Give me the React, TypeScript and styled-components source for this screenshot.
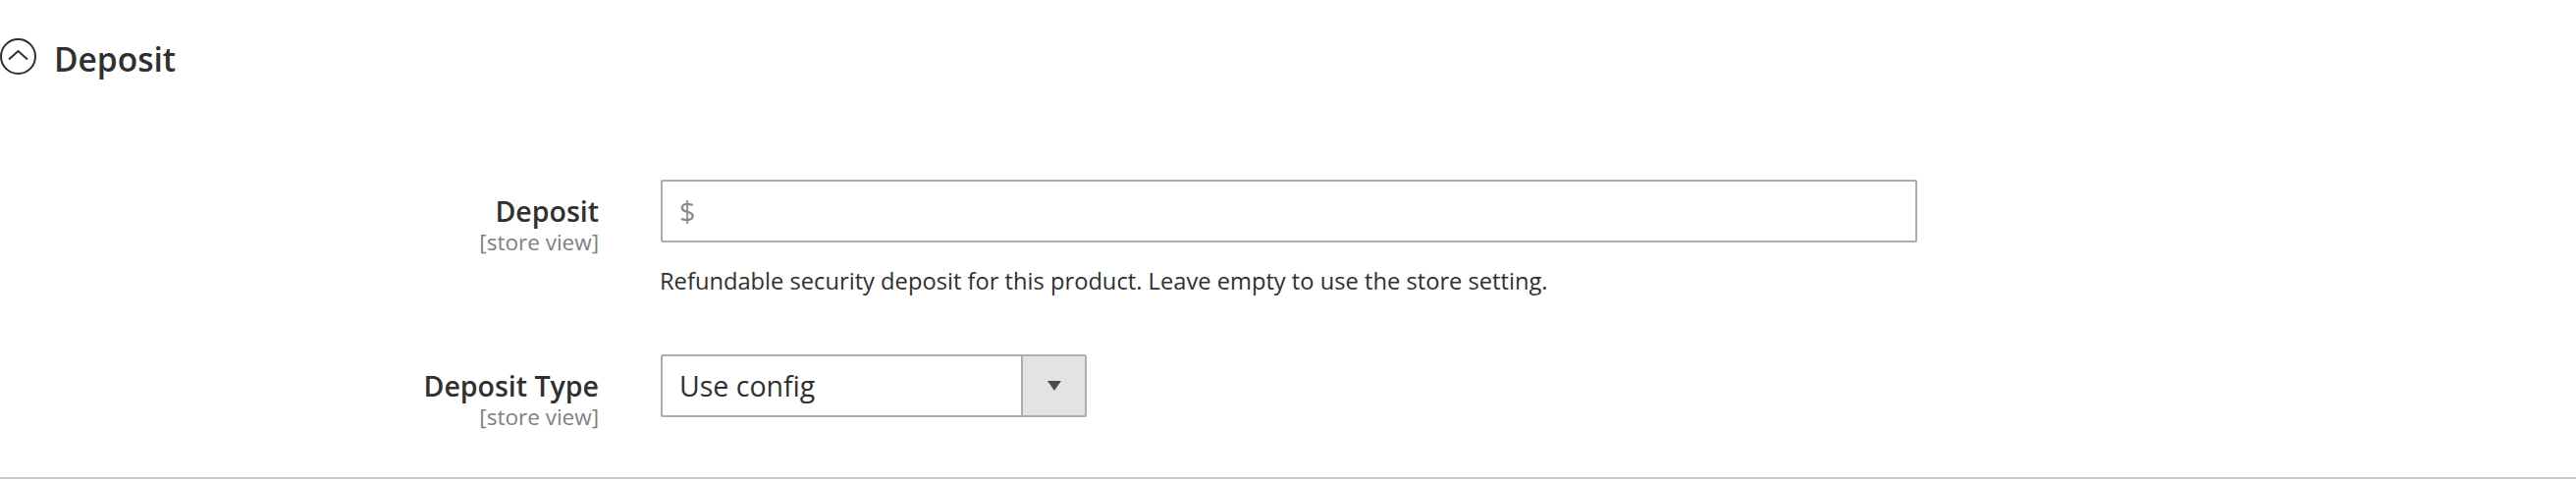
import React from 'react';
import styled, { createGlobalStyle } from 'styled-components';

const Global = createGlobalStyle`
  html, body { margin: 0; padding: 0; background: #ffffff; }
  body { font-family: "Open Sans", "Noto Sans", sans-serif; color: #303030; }
  * { box-sizing: border-box; }
`;

const Section = styled.section`
  border-bottom: 2px solid #cccccc;
  padding-bottom: 48px;
`;

const Header = styled.div`
  display: flex;
  align-items: center;
  gap: 17px;
  padding-top: 39px;
  height: 77px;
`;

const Title = styled.h2`
  margin: 0;
  padding-top: 3px;
  font-size: 33.5px;
  font-weight: 600;
  line-height: 38px;
  color: #303030;
`;

const Fields = styled.div`
  display: flex;
  flex-direction: column;
  margin-top: 106px;
`;

const Row = styled.div<{ $gap?: number }>`
  display: grid;
  grid-template-columns: 610px 1280px;
  column-gap: 63px;
  margin-top: ${(p) => p.$gap ?? 0}px;
`;

const LabelCol = styled.div`
  display: flex;
  flex-direction: column;
  align-items: flex-end;
  padding-top: 16px;
`;

const Label = styled.label`
  font-size: 28.5px;
  font-weight: 600;
  line-height: 32px;
  color: #303030;
`;

const Scope = styled.span`
  margin-top: 3px;
  font-size: 22.5px;
  line-height: 26px;
  color: #808080;
`;

const Control = styled.div`
  display: flex;
  flex-direction: column;
  align-items: flex-start;
`;

const InputBox = styled.div`
  display: flex;
  align-items: center;
  width: 100%;
  height: 64px;
  border: 2px solid #adadad;
  border-radius: 2px;
  padding: 0 17px;
  font-size: 28.5px;
  background: #ffffff;
`;

const Prefix = styled.span`
  color: #8a8a8a;
  margin-right: 8px;
`;

const TextInput = styled.input`
  flex: 1;
  border: 0;
  outline: none;
  font: inherit;
  color: #303030;
  background: transparent;
  padding: 0;
`;

const Note = styled.div`
  margin-top: 21px;
  margin-left: -1px;
  font-size: 23.7px;
  line-height: 36px;
  color: #303030;
`;

const SelectBox = styled.div`
  display: flex;
  width: 434px;
  height: 64px;
  border: 2px solid #adadad;
  border-radius: 2px;
  background: #ffffff;
`;

const SelectValue = styled.div`
  flex: 1;
  display: flex;
  align-items: center;
  padding: 0 17px;
  font-size: 28.5px;
  color: #303030;
`;

const SelectButton = styled.div`
  width: 65px;
  border-left: 2px solid #adadad;
  background: #e3e3e3;
  display: flex;
  align-items: center;
  justify-content: center;
`;

const Caret = styled.span`
  width: 0;
  height: 0;
  border-left: 7.5px solid transparent;
  border-right: 7.5px solid transparent;
  border-top: 10px solid #514943;
`;

const ToggleIcon = () => (
  <svg width="38" height="38" viewBox="0 0 38 38" fill="none">
    <circle cx="18.5" cy="18.5" r="17.5" stroke="#303030" strokeWidth="2" />
    <polyline points="9,21.5 18.5,13 28,21.5" stroke="#303030" strokeWidth="2" fill="none" />
  </svg>
);

export default function App() {
  return (
    <>
      <Global />
      <Section>
        <Header>
          <ToggleIcon />
          <Title>Deposit</Title>
        </Header>
        <Fields>
          <Row>
            <LabelCol>
              <Label>Deposit</Label>
              <Scope>[store view]</Scope>
            </LabelCol>
            <Control>
              <InputBox>
                <Prefix>$</Prefix>
                <TextInput type="text" />
              </InputBox>
              <Note>Refundable security deposit for this product. Leave empty to use the store setting.</Note>
            </Control>
          </Row>
          <Row $gap={57}>
            <LabelCol>
              <Label>Deposit Type</Label>
              <Scope>[store view]</Scope>
            </LabelCol>
            <Control>
              <SelectBox>
                <SelectValue>Use config</SelectValue>
                <SelectButton>
                  <Caret />
                </SelectButton>
              </SelectBox>
            </Control>
          </Row>
        </Fields>
      </Section>
    </>
  );
}
